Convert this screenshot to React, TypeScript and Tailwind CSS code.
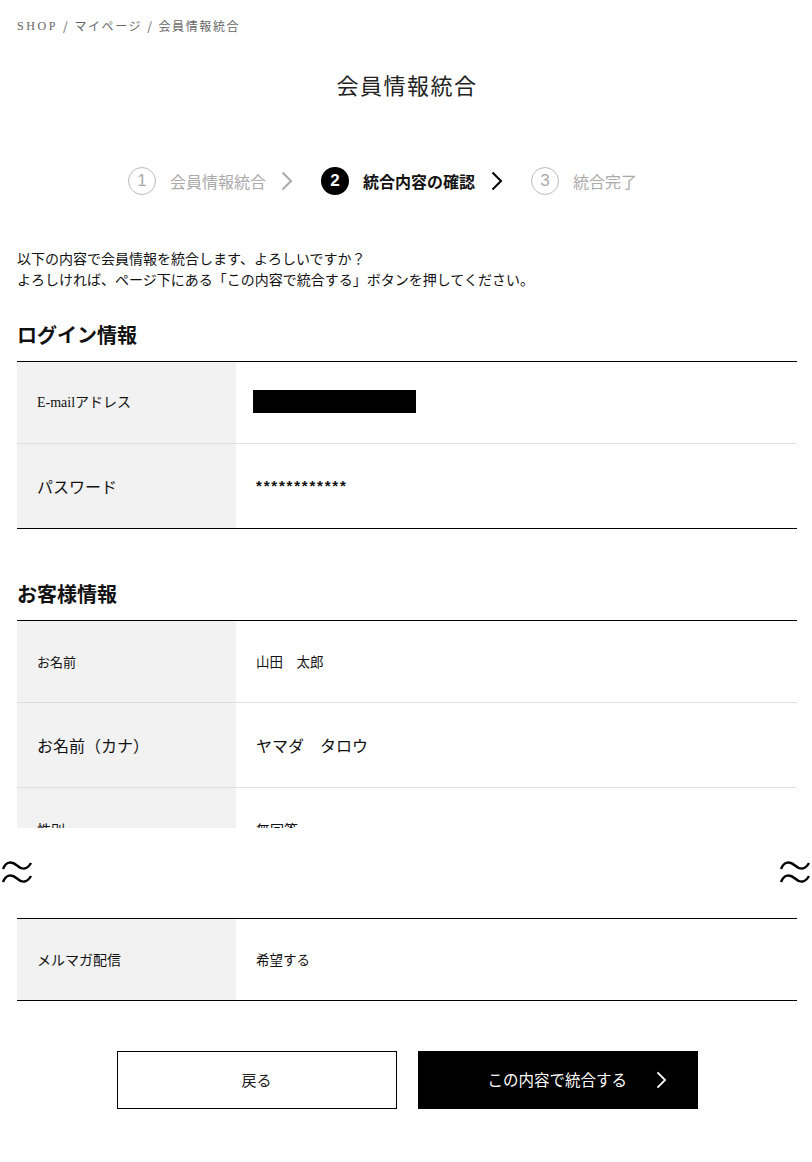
const jp = '[font-family:"Noto_Sans_CJK_JP",sans-serif]'

type Row = {
    label: string
    value?: string
    labelClass?: string
    valueClass?: string
    redacted?: boolean
    h?: string
}

const loginRows: Row[] = [
    {
        label: 'E-mailアドレス',
        labelClass: 'text-[14px] [font-family:"Liberation_Serif","Noto_Sans_CJK_JP",serif]',
        redacted: true,
        h: 'h-[82px]',
    },
    {
        label: 'パスワード',
        labelClass: 'text-[16px]',
        value: '************',
        valueClass: 'text-[15px] font-bold text-[#0b2a4a] tracking-[1.8px] [font-family:"Liberation_Sans",sans-serif]',
        h: 'h-[84px]',
    },
]

const customerRows: Row[] = [
    { label: 'お名前', value: '山田\u3000太郎', labelClass: 'text-[13px]', valueClass: 'text-[13.5px]', h: 'h-[82px]' },
    { label: 'お名前（カナ）', value: 'ヤマダ\u3000タロウ', labelClass: 'text-[16px]', valueClass: 'text-[16px]', h: 'h-[85px]' },
]

function TableRow({ row, last }: { row: Row; last?: boolean }) {
    return (
        <div className={`flex ${row.h ?? 'h-[83px]'} ${last ? '' : 'border-b border-[#dedede]'}`}>
            <div className={`w-[219px] shrink-0 bg-[#f2f2f2] flex items-center pl-[20px] text-[#111] ${row.labelClass ?? ''}`}>
                {row.label}
            </div>
            <div className={`flex-1 flex items-center pl-[20px] text-[#111] ${row.valueClass ?? ''}`}>
                {row.redacted ? <div className="w-[163px] h-[23px] bg-black -ml-[3px] -mt-[2px]" /> : row.value}
            </div>
        </div>
    )
}

function Chevron({ className }: { className?: string }) {
    return (
        <svg viewBox="0 0 12 20" className={className} fill="none" stroke="currentColor" strokeWidth={2}>
            <polyline points="1.5,1.5 10,10 1.5,18.5" />
        </svg>
    )
}

function Step({ n, label, active }: { n: number; label: string; active?: boolean }) {
    return (
        <div className="flex items-center">
            <div
                className={`w-[28px] h-[28px] rounded-full flex items-center justify-center shrink-0 ${
                    active
                        ? 'bg-black text-white font-bold text-[17px] [font-family:"Liberation_Sans",sans-serif]'
                        : 'border border-[#bbb] text-[#aaa] text-[17px] [font-family:"Liberation_Sans",sans-serif] font-light'
                }`}
            >
                {n}
            </div>
            <span className={`ml-[14px] text-[16px] ${active ? 'text-[#111] font-bold' : 'text-[#aaa]'}`}>{label}</span>
        </div>
    )
}

function Wave() {
    return (
        <svg viewBox="0 0 32 27" className="w-[32px] h-[27px] text-black" fill="none" stroke="currentColor" strokeWidth={2.4}>
            <path d="M2 10 C 5 2, 11 2, 16 6.5 S 26 11, 30 4" />
            <path d="M2 23 C 5 15, 11 15, 16 19.5 S 26 24, 30 17" />
        </svg>
    )
}

export default function App() {
    return (
        <div className={`w-[812px] h-[1162px] bg-white ${jp} text-[#111]`}>
            <div className="pl-[17px] pr-[15px]">
                <div className="pt-[17px] text-[12px] leading-[18px] tracking-[1.6px] text-[#666] flex items-center gap-[5px]">
                    <span className='[font-family:"Liberation_Serif",serif] tracking-[2.6px]'>SHOP</span>
                    <span>/</span>
                    <span>マイページ</span>
                    <span>/</span>
                    <span>会員情報統合</span>
                </div>

                <h1 className="mt-[33px] text-center text-[22px] leading-[32px] tracking-[1.5px] text-[#222]">会員情報統合</h1>

                <div className="mt-[67px] h-[28px] flex items-center pl-[111px]">
                    <Step n={1} label="会員情報統合" />
                    <Chevron className="w-[12px] h-[20px] ml-[15px] mr-[28px] text-[#aaa]" />
                    <Step n={2} label="統合内容の確認" active />
                    <Chevron className="w-[12px] h-[20px] ml-[16px] mr-[28px] text-black" />
                    <Step n={3} label="統合完了" />
                </div>

                <div className="mt-[53px] text-[14px] leading-[21px] text-[#111]">
                    <p>以下の内容で会員情報を統合します、よろしいですか？</p>
                    <p>よろしければ、ページ下にある「この内容で統合する」ボタンを押してください。</p>
                </div>

                <h2 className="mt-[31px] text-[20px] font-bold leading-[28px]">ログイン情報</h2>
                <div className="mt-[12px] border-t border-b border-black">
                    {loginRows.map((r, i) => (
                        <TableRow key={r.label} row={r} last={i === loginRows.length - 1} />
                    ))}
                </div>

                <h2 className="mt-[51px] text-[20px] font-bold leading-[28px]">お客様情報</h2>
                <div className="mt-[12px] border-t border-black h-[208px] overflow-hidden">
                    {customerRows.map((r) => (
                        <TableRow key={r.label} row={r} />
                    ))}
                    <TableRow row={{ label: '性別', value: '無回答', labelClass: 'text-[14px]', valueClass: 'text-[14px]' }} last />
                </div>
            </div>

            <div className="flex justify-between px-[1px] mt-[31px]">
                <Wave />
                <Wave />
            </div>

            <div className="pl-[17px] pr-[15px] mt-[32px]">
                <div className="border-t border-b border-black">
                    <TableRow row={{ label: 'メルマガ配信', value: '希望する', labelClass: 'text-[14px]', valueClass: 'text-[13.5px]', h: 'h-[81px]' }} last />
                </div>

                <div className="mt-[50px] flex justify-center gap-[21px]">
                    <button className="w-[280px] h-[58px] border border-black text-[15px] text-[#222] bg-white">戻る</button>
                    <button className="w-[280px] h-[58px] bg-black text-white text-[15.5px] flex items-center pl-[70px]">
                        <span>この内容で統合する</span>
                        <Chevron className="w-[11px] h-[18px] ml-[29px]" />
                    </button>
                </div>
            </div>
        </div>
    )
}
